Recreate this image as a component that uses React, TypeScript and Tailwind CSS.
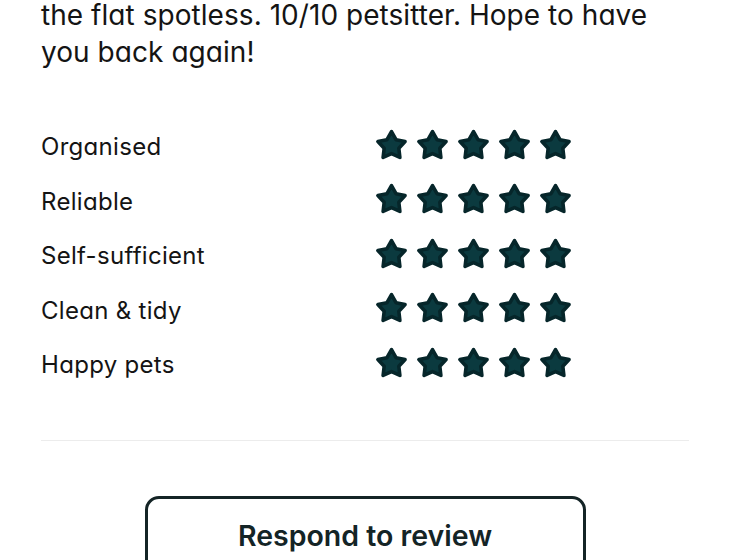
const ratings = ["Organised", "Reliable", "Self-sufficient", "Clean & tidy", "Happy pets"];

// chunky rounded star, points worked out once
const starPoints = (() => {
  const pts: string[] = [];
  for (let i = 0; i < 10; i++) {
    const r = i % 2 === 0 ? 10.4 : 5.6;
    const a = (Math.PI / 5) * i - Math.PI / 2;
    pts.push(`${(12 + r * Math.cos(a)).toFixed(2)},${(13 + r * Math.sin(a)).toFixed(2)}`);
  }
  return pts.join(" ");
})();

const Star = () => (
  <svg viewBox="0 0 24 24" className="w-[33px] h-[33px]">
    <polygon points={starPoints} fill="#0b3a3f" stroke="#06262a" strokeWidth={2.6} strokeLinejoin="round" />
  </svg>
);

const App = () => {
  return (
    <div className="w-[730px] h-[560px] overflow-hidden bg-white font-['Inter',sans-serif] [font-feature-settings:'cv11'] text-[#141414]">
      <div className="px-[41px]">
        {/* tail of the review text */}
        <p className="-mt-[3px] text-[28px] leading-[37px] tracking-[0.05px]">
          the flat spotless. 10/10 petsitter. Hope to have
          <br />
          you back again!
        </p>

        {/* ratings */}
        <div className="mt-[46px] flex flex-col">
          {ratings.map((label) => (
            <div key={label} className="h-[54.5px] flex items-center">
              <span className="w-[334px] mt-[6px] text-[24px] tracking-[0.3px]">{label}</span>
              <div className="flex gap-[8px]">
                <Star />
                <Star />
                <Star />
                <Star />
                <Star />
              </div>
            </div>
          ))}
        </div>

        <div className="mt-[50px] h-px bg-[#ececec]" />
      </div>

      <button className="mt-[55px] mx-auto block w-[441px] h-[100px] border-[3px] border-[#142426] rounded-[14px] pb-[19px] text-[28.5px] font-semibold text-[#142426] tracking-[0px]">
        Respond to review
      </button>
    </div>
  );
};

export default App;
